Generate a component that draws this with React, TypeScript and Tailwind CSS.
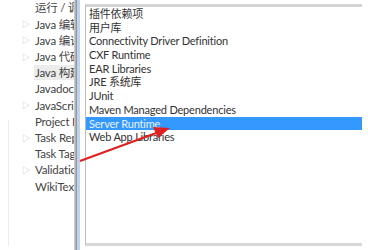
import React from 'react';

const treeItems = [
  { label: '运行 / 调试', arrow: false },
  { label: 'Java 编辑器', arrow: true },
  { label: 'Java 编译器', arrow: true },
  { label: 'Java 代码样式', arrow: true },
  { label: 'Java 构建路径', arrow: false, active: true },
  { label: 'Javadoc 位置', arrow: false },
  { label: 'JavaScript', arrow: true },
  { label: 'Project Facets', arrow: false },
  { label: 'Task Repository', arrow: true },
  { label: 'Task Tags', arrow: false },
  { label: 'Validation', arrow: true },
  { label: 'WikiText', arrow: false },
];

const libs = [
  '插件依赖项',
  '用户库',
  'Connectivity Driver Definition',
  'CXF Runtime',
  'EAR Libraries',
  'JRE 系统库',
  'JUnit',
  'Maven Managed Dependencies',
  'Server Runtime',
  'Web App Libraries',
];

const font = { fontFamily: 'Lato, "Noto Sans CJK SC", sans-serif' };

export default function App() {
  return (
    <div className="relative w-[380px] h-[250px] bg-white overflow-hidden flex" style={font}>
      {/* left tree */}
      <div className="w-[74px] h-full relative overflow-hidden">
        <div className="absolute left-[8px] top-[120px] bottom-[4px] w-px bg-[#ececec]" />
        <div className="flex flex-col">
          {treeItems.map((t) => (
            <div key={t.label} className="h-[16.2px] flex items-center whitespace-nowrap text-[11.5px] tracking-[-0.2px] text-[#444]">
              <span className="w-[34px] shrink-0 pl-[22px] text-[8px] text-[#bbb]">{t.arrow ? '▷' : ''}</span>
              <span className={t.active ? 'bg-[#ececec] pl-[1px] pr-4 leading-[15px]' : 'pl-[1px]'}>{t.label}</span>
            </div>
          ))}
        </div>
      </div>

      {/* splitter */}
      <div className="w-[3px] h-full bg-gradient-to-r from-[#d8d8d8] to-[#8c8c8c]" />
      <div className="w-[3px] h-full bg-[#bcd3ef]" />

      {/* right list */}
      <div className="flex-1 pl-[5px] pt-[4px] pb-[4px] pr-[18px]">
        <div className="h-[242px] border-l border-[#bdbdbd] border-t-[3px] border-t-[#d4d4d4] border-b-[3px] border-b-[#d8d8d8]">
          {libs.map((l) => (
            <div
              key={l}
              className={
                'h-[13.7px] leading-[13.7px] pl-[3px] text-[11px] tracking-[-0.2px] whitespace-nowrap ' +
                (l === 'Server Runtime' ? 'bg-[#3399ff] text-[#e8f2ff]' : 'text-[#333]')
              }
            >
              {l}
            </div>
          ))}
        </div>
      </div>

      {/* red arrow */}
      <svg className="absolute left-0 top-0" width="380" height="250">
        <line x1="80" y1="161" x2="159" y2="132" stroke="#e02020" strokeWidth="2.2" />
        <polygon points="170,128 153,127 158,138" fill="#e02020" />
      </svg>
    </div>
  );
}
